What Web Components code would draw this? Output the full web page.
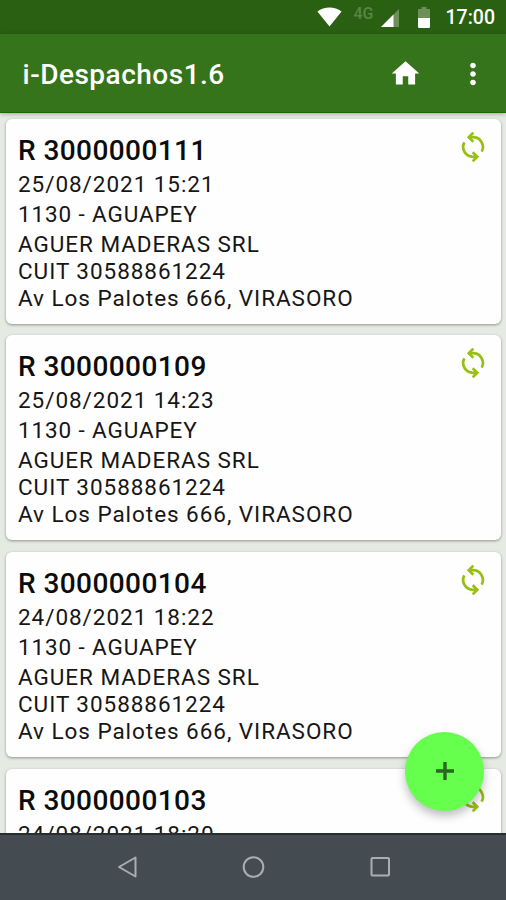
<!DOCTYPE html>
<html lang="es">
<head>
<meta charset="utf-8">
<title>i-Despachos</title>
<style>
  html, body {
    margin: 0;
    height: 100%;
    overflow: hidden;
    font-family: Roboto, "Liberation Sans", sans-serif;
  }
</style>
</head>
<body>
<phone-screen>
  <status-bar slot="top" time="17:00" network="4G"></status-bar>
  <app-bar slot="top">i-Despachos1.6</app-bar>

  <despacho-card number="R 3000000111" date="25/08/2021 15:21">
    <p slot="place">1130 - AGUAPEY</p>
    <p>AGUER MADERAS SRL</p>
    <p>CUIT 30588861224</p>
    <p>Av Los Palotes 666, VIRASORO</p>
  </despacho-card>
  <despacho-card number="R 3000000109" date="25/08/2021 14:23">
    <p slot="place">1130 - AGUAPEY</p>
    <p>AGUER MADERAS SRL</p>
    <p>CUIT 30588861224</p>
    <p>Av Los Palotes 666, VIRASORO</p>
  </despacho-card>
  <despacho-card number="R 3000000104" date="24/08/2021 18:22">
    <p slot="place">1130 - AGUAPEY</p>
    <p>AGUER MADERAS SRL</p>
    <p>CUIT 30588861224</p>
    <p>Av Los Palotes 666, VIRASORO</p>
  </despacho-card>
  <despacho-card number="R 3000000103" date="24/08/2021 18:20"></despacho-card>

  <add-button slot="fab"></add-button>
  <nav-bar slot="bottom"></nav-bar>
</phone-screen>

<script>
// clones the markup into an open shadow root
function attach(el, html) {
  const template = document.createElement("template");
  template.innerHTML = html;
  el.attachShadow({ mode: "open" }).appendChild(template.content.cloneNode(true));
}

// whole screen: bars on top, list in the middle, navigation at the bottom
class PhoneScreen extends HTMLElement {
  constructor() {
    super();
    attach(this, `
      <style>
        :host {
          display: flex;
          flex-direction: column;
          position: relative;
          height: 900px;
          background: #e5ebe2;
        }
        .list {
          flex: 1;
          min-height: 0;
          overflow: hidden;
          display: flex;
          flex-direction: column;
          gap: 11.6px;
          padding: 5.8px 5px 0 6px;
        }
        .fab {
          position: absolute;
          right: 22px;
          bottom: 89.500px;
        }
      </style>
      <slot name="top"></slot>
      <div class="list"><slot></slot></div>
      <slot name="bottom"></slot>
      <div class="fab"><slot name="fab"></slot></div>
    `);
  }
}
customElements.define("phone-screen", PhoneScreen);

class StatusBar extends HTMLElement {
  connectedCallback() {
    attach(this, `
      <style>
        :host {
          display: flex;
          flex: none;
          justify-content: flex-end;
          align-items: center;
          height: 34px;
          box-sizing: border-box;
          padding-right: 11px;
          background: #296012;
          color: #fff;
        }
        svg { display: block; flex: none; }
        .net {
          font-size: 16px;
          font-weight: 500;
          line-height: 16px;
          color: #5b8548;
          margin: -7px 7px 0 12px;
        }
        .signal { margin-top: 2px; }
        .battery { margin: 1px 0 0 19px; }
        .time {
          font-size: 19.5px;
          font-weight: 500;
          line-height: 24px;
          margin: 2px 0 0 16px;
        }
      </style>
      <svg width="25" height="20" viewBox="0 0 26 21"><path fill="#fff" d="M0.3 4.6C7.5-.9 18.5-.9 25.7 4.6L13 20.6z"/></svg>
      <span class="net">${this.getAttribute("network")}</span>
      <svg class="signal" width="18" height="18" viewBox="0 0 18 18"><path fill="#6b9159" d="M18 0v18H0z"/><path fill="#fff" d="M12.5 5.5V18H0z"/></svg>
      <svg class="battery" width="12" height="21" viewBox="0 0 12 21"><path fill="#6b9159" d="M3.5 0h5v2H12v9H0V2h3.5z"/><path fill="#fff" d="M0 11h12v8.7q0 1.3-1.3 1.3H1.3Q0 21 0 19.7z"/></svg>
      <span class="time">${this.getAttribute("time")}</span>
    `);
  }
}
customElements.define("status-bar", StatusBar);

class AppBar extends HTMLElement {
  constructor() {
    super();
    attach(this, `
      <style>
        :host {
          display: flex;
          flex: none;
          align-items: center;
          height: 79px;
          box-sizing: border-box;
          padding: 0 16px 0 22.500px;
          background: #35741b;
          border-bottom: 1px solid #1f6606;
          box-shadow: 0 1px 4px rgba(0, 0, 0, .3);
          position: relative;
          color: #fff;
        }
        .title {
          flex: 1;
          font-size: 28px;
          font-weight: 500;
          line-height: 34px;
          letter-spacing: .5px;
          margin-top: 4px;
        }
        svg { display: block; fill: #fff; }
        .menu { margin-left: 34px; margin-top: 1px; }
      </style>
      <span class="title"><slot></slot></span>
      <svg width="33" height="33" viewBox="0 0 24 24"><path d="M10 20v-6h4v6h5v-8h3L12 3 2 12h3v8z"/></svg>
      <svg class="menu" width="34" height="34" viewBox="0 0 24 24"><path d="M12 8c1.1 0 2-.9 2-2s-.9-2-2-2-2 .9-2 2 .9 2 2 2zm0 2c-1.1 0-2 .9-2 2s.9 2 2 2 2-.9 2-2-.9-2-2-2zm0 6c-1.1 0-2 .9-2 2s.9 2 2 2 2-.9 2-2-.9-2-2-2z"/></svg>
    `);
  }
}
customElements.define("app-bar", AppBar);

// one dispatch with its pending sync mark
class DespachoCard extends HTMLElement {
  connectedCallback() {
    attach(this, `
      <style>
        :host {
          display: flex;
          flex: none;
          align-items: flex-start;
          justify-content: space-between;
          height: 205px;
          box-sizing: border-box;
          padding: 14px 11px 0 12px;
          background: #fefefe;
          border-radius: 6px;
          box-shadow: 0 1px 3px rgba(0, 0, 0, .38);
          color: #161616;
          font-size: 22.5px;
          letter-spacing: .95px;
          white-space: nowrap;
        }
        h2 {
          margin: 0;
          font-size: 28px;
          font-weight: 500;
          line-height: 35px;
          letter-spacing: .42px;
          color: #0c0c0c;
        }
        p, ::slotted(p) { margin: 0; line-height: 27px; }
        .date { line-height: 33px; }
        ::slotted([slot="place"]) {
          line-height: 27px;
          margin-bottom: 3px;
          letter-spacing: .88px;
        }
        svg {
          display: block;
          flex: none;
          margin-top: -3px;
          fill: none;
          stroke: #98bf14;
          stroke-width: 2.7;
        }
      </style>
      <div>
        <h2>${this.getAttribute("number")}</h2>
        <p class="date">${this.getAttribute("date")}</p>
        <slot name="place"></slot>
        <slot></slot>
      </div>
      <svg width="34" height="34" viewBox="0 2 34 34">
        <path d="M13.500 9.200H17a9.800 9.800 0 0 1 8.700 14.400M17.300 4.600l-4.600 4.600 4.600 4.600"/>
        <path d="M20.500 28.800H17a9.800 9.800 0 0 1-8.700-14.400M16.700 24.200l4.600 4.600-4.600 4.600"/>
      </svg>
    `);
  }
}
customElements.define("despacho-card", DespachoCard);

class AddButton extends HTMLElement {
  constructor() {
    super();
    attach(this, `
      <style>
        :host {
          display: grid;
          place-items: center;
          width: 79px;
          height: 79px;
          border-radius: 50%;
          background: #66ff4d;
          box-shadow: 0 5px 10px rgba(0, 0, 0, .26);
        }
      </style>
      <svg width="18" height="18" viewBox="0 0 18 18"><path d="M9 0v18M0 9h18" stroke="#29661f" stroke-width="3.4"/></svg>
    `);
  }
}
customElements.define("add-button", AddButton);

// android back / home / recents
class NavBar extends HTMLElement {
  constructor() {
    super();
    attach(this, `
      <style>
        :host {
          display: flex;
          flex: none;
          justify-content: center;
          align-items: center;
          gap: 102.5px;
          height: 67px;
          box-sizing: border-box;
          padding-bottom: 2px;
          border-top: 2px solid #252e33;
          background: #444c52;
          position: relative;
        }
        svg { fill: none; stroke: #a9aeb1; stroke-width: 2; stroke-linejoin: round; }
      </style>
      <svg width="24" height="24" viewBox="0 0 24 24"><path d="M20.5 2.500v19L4 12z"/></svg>
      <svg width="24" height="24" viewBox="0 0 24 24"><circle cx="12.500" cy="12" r="9.800"/></svg>
      <svg width="24" height="24" viewBox="0 0 24 24"><rect x="3.500" y="3" width="17.500" height="17.500" rx="1"/></svg>
    `);
  }
}
customElements.define("nav-bar", NavBar);
</script>
</body>
</html>
